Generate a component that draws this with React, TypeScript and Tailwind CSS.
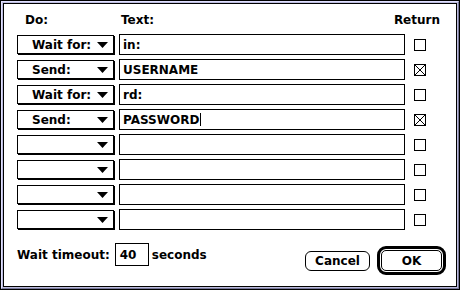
import React from "react";

// Fila de la tabla: acción, texto y si se envía Return
interface ScriptRow {
  action: string;
  text: string;
  ret: boolean;
  cursor?: boolean;
}

const rows: ScriptRow[] = [
  { action: "Wait for:", text: "in:", ret: false },
  { action: "Send:", text: "USERNAME", ret: true },
  { action: "Wait for:", text: "rd:", ret: false },
  { action: "Send:", text: "PASSWORD", ret: true, cursor: true },
  { action: "", text: "", ret: false },
  { action: "", text: "", ret: false },
  { action: "", text: "", ret: false },
  { action: "", text: "", ret: false },
];

function PopupMenu({ label }: { label: string }) {
  return (
    <div className="relative flex h-[19px] w-[97px] items-center border border-black bg-white shadow-[1px_1px_0_#000]">
      <span className="ml-[14px]">{label}</span>
      <svg className="absolute right-[5px] top-[6px]" width="11" height="6" viewBox="0 0 11 6">
        <polygon points="0,0 11,0 5.5,6" fill="#000" />
      </svg>
    </div>
  );
}

function CheckBox({ checked }: { checked: boolean }) {
  return (
    <div className="h-[12px] w-[12px] border border-black bg-white">
      {checked && (
        <svg width="10" height="10" viewBox="0 0 10 10">
          <line x1="0" y1="0" x2="10" y2="10" stroke="#000" strokeWidth="1" />
          <line x1="10" y1="0" x2="0" y2="10" stroke="#000" strokeWidth="1" />
        </svg>
      )}
    </div>
  );
}

export default function App() {
  return (
    <div
      className="h-[290px] w-[460px] border border-black bg-[#bbbbdd] text-[12px] font-bold leading-none text-black"
      style={{ fontFamily: '"DejaVu Sans", sans-serif' }}
    >
      <div className="h-full w-full border border-t-[#e0e0ff] border-l-[#e0e0ff] border-r-[#777799] border-b-[#777799] p-px">
        <div className="flex h-full w-full flex-col border border-black bg-white pl-[13px] pr-[10px] pt-[6px]">
          {/* Encabezados */}
          <div className="flex h-[20px] items-center">
            <span className="w-[102px] pl-[8px]">Do:</span>
            <span className="flex-1 pl-[2px]">Text:</span>
            <span className="pr-[6px]">Return</span>
          </div>

          {/* Filas */}
          <div className="mt-[4px] flex flex-col gap-[4px]">
            {rows.map((r, i) => (
              <div key={i} className="flex h-[21px] items-center">
                <div className="w-[102px]">
                  <PopupMenu label={r.action} />
                </div>
                <div className="flex h-[21px] w-[286px] items-center border border-black pl-[3px]">
                  <span>{r.text}</span>
                  {r.cursor && <span className="ml-px h-[13px] w-px bg-black" />}
                </div>
                <div className="pl-[9px]">
                  <CheckBox checked={r.ret} />
                </div>
              </div>
            ))}
          </div>

          {/* Pie */}
          <div className="mt-[13px] flex items-start">
            <div className="flex h-[23px] items-center">
              <span>Wait timeout:</span>
              <div className="ml-[5px] flex h-[23px] w-[34px] items-center border border-black pl-[4px]">40</div>
              <span className="ml-[3px]">seconds</span>
            </div>
            <div className="flex-1" />
            <button className="mt-[8px] h-[20px] w-[65px] rounded-[6px] border border-black bg-white text-[12px] font-bold">
              Cancel
            </button>
            <div className="ml-[7px] mt-[3px] rounded-[9px] border-[3px] border-black p-px">
              <button className="h-[21px] w-[61px] rounded-[5px] border border-black bg-white text-[12px] font-bold">
                OK
              </button>
            </div>
          </div>
        </div>
      </div>
    </div>
  );
}
